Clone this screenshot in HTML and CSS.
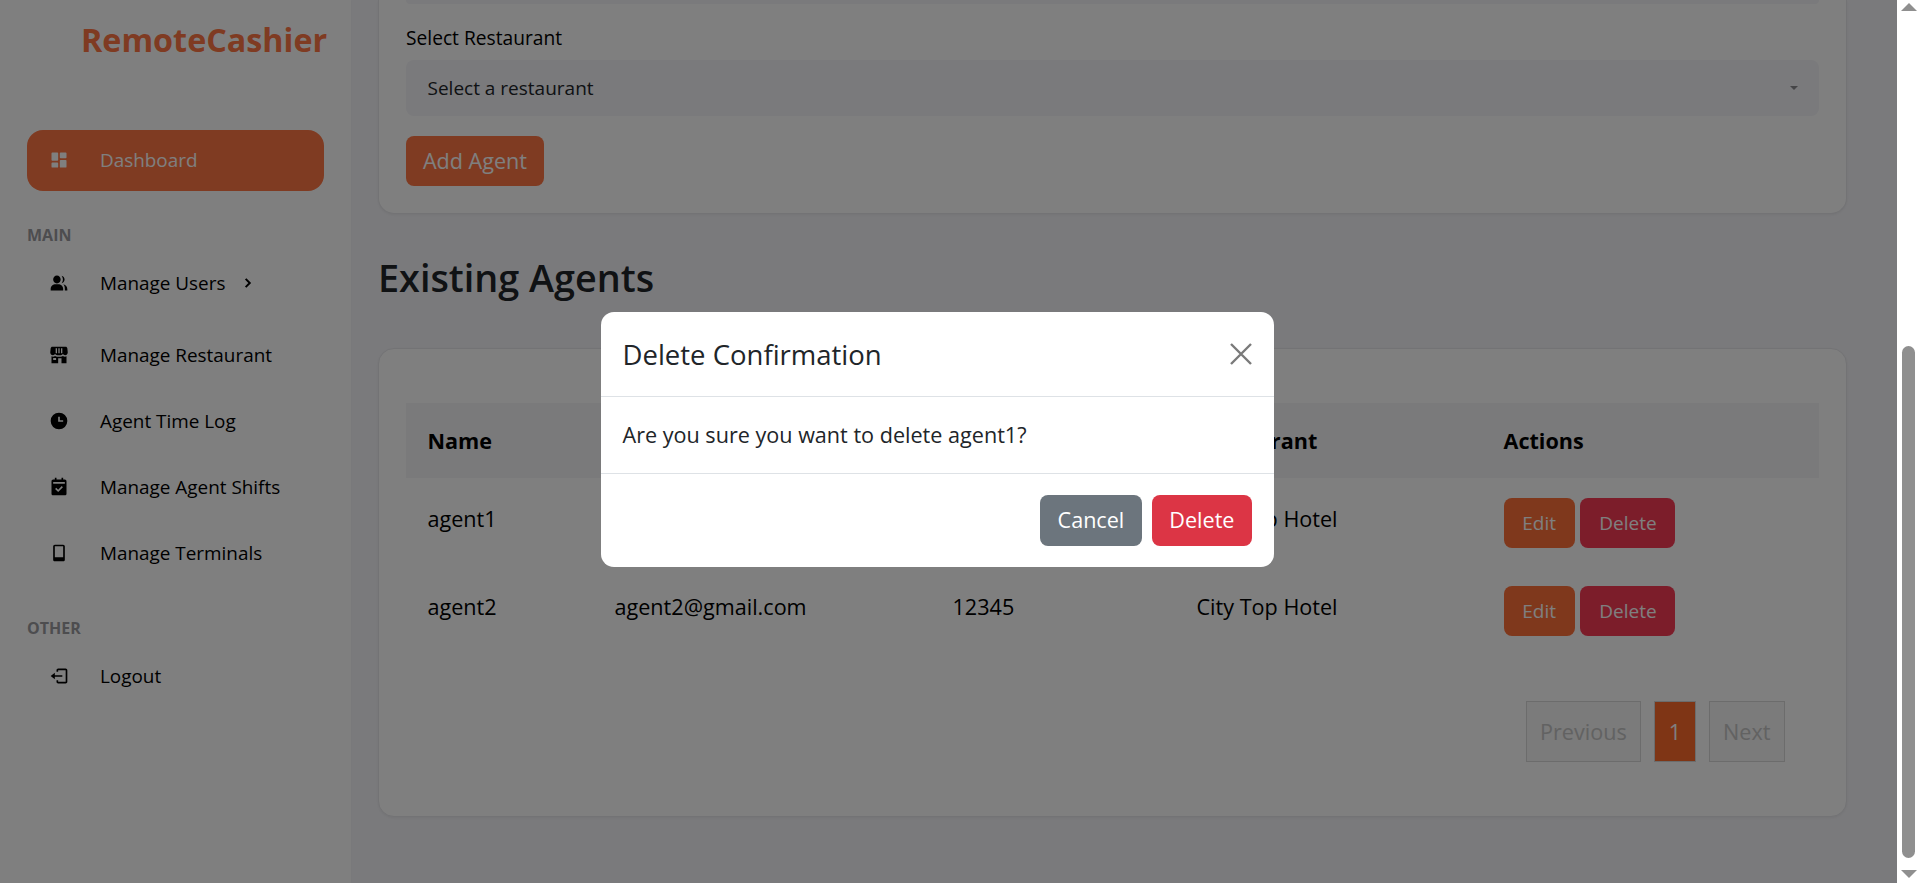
FILE: index.html
```html
<!DOCTYPE html>
<html lang="en">

<head>
    <meta charset="UTF-8">
    <title>RemoteCashier - Agents</title>
    <link rel="stylesheet" href="styles.css">
</head>

<body>
    <div class="app">
        <aside class="sidebar">
            <div class="logo">RemoteCashier</div>
            <a class="navItem navActive">
                <svg class="navIcon" viewBox="0 0 24 24"><path d="M4 13h6a1 1 0 0 0 1-1V4a1 1 0 0 0-1-1H4a1 1 0 0 0-1 1v8a1 1 0 0 0 1 1zm-1 7a1 1 0 0 0 1 1h6a1 1 0 0 0 1-1v-4a1 1 0 0 0-1-1H4a1 1 0 0 0-1 1v4zm10 0a1 1 0 0 0 1 1h6a1 1 0 0 0 1-1v-7a1 1 0 0 0-1-1h-6a1 1 0 0 0-1 1v7zm1-10h6a1 1 0 0 0 1-1V4a1 1 0 0 0-1-1h-6a1 1 0 0 0-1 1v5a1 1 0 0 0 1 1z"/></svg>
                <span>Dashboard</span>
            </a>
            <div class="navLabel labelMain">MAIN</div>
            <a class="navItem itemUsers">
                <svg class="navIcon" viewBox="0 0 24 24"><path d="M9.500 12.500c2.600 0 4.500-2.100 4.500-4.700S12.100 3 9.500 3 5 5.200 5 7.800s1.900 4.700 4.500 4.700zM11 13.500H8c-3.300 0-6 2.500-6 5.600V21h15v-1.900c0-3.100-2.700-5.600-6-5.600zM15 3.300c1 1.100 1.700 2.800 1.700 4.500 0 1.700-.6 3.300-1.700 4.400 2.100-.2 3.700-2.200 3.700-4.400S17.100 3.500 15 3.300zM17.200 13.600c1.300 1.300 1.800 3.300 1.800 5.500V21h3v-1.600c0-2.900-1.900-5.200-4.800-5.800z"/></svg>
                <span>Manage Users</span>
                <svg class="navChevron" viewBox="0 0 24 24"><path d="M8 5l7 7-7 7" /></svg>
            </a>
            <a class="navItem">
                <svg class="navIcon" viewBox="0 0 24 24"><path d="M4 2h16c1 0 1.800.8 2 1.800L22.500 9c0 1.800-1.400 3.200-3.200 3.200-1.100 0-2-.5-2.600-1.300-.6.800-1.500 1.300-2.500 1.300H9.800c-1 0-1.900-.5-2.500-1.300-.6.800-1.500 1.300-2.600 1.300-1.800 0-3.200-1.400-3.200-3.200L2 3.800C2.200 2.800 3 2 4 2zM3 13.600c.6.300 1.200.4 1.800.4.900 0 1.800-.3 2.500-.8.700.5 1.600.8 2.500.8h4.400c.9 0 1.800-.3 2.500-.8.700.5 1.600.8 2.500.8.600 0 1.200-.1 1.800-.4V22h-6v-6h-4v6H3v-8.400zM8 4v6h1.600V4H8zm3.200 0v6h1.600V4h-1.600zm3.200 0v6H16V4h-1.600zM5 15.500V18h3.500v-2.500H5z" fill-rule="evenodd"/></svg>
                <span>Manage Restaurant</span>
            </a>
            <a class="navItem">
                <svg class="navIcon" viewBox="0 0 24 24"><path d="M12 2a10 10 0 1 0 0 20 10 10 0 0 0 0-20zm5 11h-6V7h2v4h4v2z"/></svg>
                <span>Agent Time Log</span>
            </a>
            <a class="navItem">
                <svg class="navIcon" viewBox="0 0 24 24"><path d="M21 5c0-1.100-.9-2-2-2h-2V1h-2v2H9V1H7v2H5c-1.100 0-2 .9-2 2v15c0 1.100.9 2 2 2h14c1.100 0 2-.9 2-2V5zm-10 13-3.700-3.700 1.400-1.400 2.300 2.300 4.300-4.300 1.400 1.400L11 18zm8-10H5V6h14v2z"/></svg>
                <span>Manage Agent Shifts</span>
            </a>
            <a class="navItem">
                <svg class="navIcon" viewBox="0 0 24 24"><path d="M17 2H7C5.900 2 5 2.900 5 4v16c0 1.100.9 2 2 2h10c1.100 0 2-.9 2-2V4c0-1.100-.9-2-2-2zM7 4h10v13H7V4z" fill-rule="evenodd"/></svg>
                <span>Manage Terminals</span>
            </a>
            <div class="navLabel labelOther">OTHER</div>
            <a class="navItem">
                <svg class="navIcon" viewBox="0 0 24 24"><path d="M2 12l5 4v-3h9v-2H7V8l-5 4zM20 3h-9c-1.100 0-2 .9-2 2v2h2V5h9v14h-9v-2H9v2c0 1.100.9 2 2 2h9c1.100 0 2-.9 2-2V5c0-1.100-.9-2-2-2z"/></svg>
                <span>Logout</span>
            </a>
        </aside>

        <main class="content">
            <section class="card cardForm">
                <div class="fieldStub"></div>
                <label class="fieldLabel">Select Restaurant</label>
                <div class="selectBox">
                    <span>Select a restaurant</span>
                    <i class="selectArrow"></i>
                </div>
                <button class="btn btnAdd">Add Agent</button>
            </section>

            <h2 class="pageTitle">Existing Agents</h2>

            <section class="card cardTable">
                <table class="agentTable">
                    <thead>
                        <tr>
                            <th class="colName">Name</th>
                            <th class="colEmail">Email</th>
                            <th class="colPhone">Phone</th>
                            <th class="colRest">Restaurant</th>
                            <th>Actions</th>
                        </tr>
                    </thead>
                    <tbody>
                        <tr>
                            <td>agent1</td>
                            <td>agent1@gmail.com</td>
                            <td>12345</td>
                            <td>City Top Hotel</td>
                            <td class="actions">
                                <button class="btn btnSmall btnEdit">Edit</button>
                                <button class="btn btnSmall btnDanger">Delete</button>
                            </td>
                        </tr>
                        <tr>
                            <td>agent2</td>
                            <td>agent2@gmail.com</td>
                            <td>12345</td>
                            <td>City Top Hotel</td>
                            <td class="actions">
                                <button class="btn btnSmall btnEdit">Edit</button>
                                <button class="btn btnSmall btnDanger">Delete</button>
                            </td>
                        </tr>
                    </tbody>
                </table>
                <div class="pagination">
                    <a class="pageBtn pageOff">Previous</a>
                    <a class="pageBtn pageOn">1</a>
                    <a class="pageBtn pageOff">Next</a>
                </div>
            </section>
        </main>

        <div class="overlay">
            <div class="modal">
                <div class="modalHead">
                    <h3>Delete Confirmation</h3>
                    <svg class="modalClose" viewBox="0 0 22 22"><path d="M1 1l20 20M21 1L1 21"/></svg>
                </div>
                <div class="modalBody">Are you sure you want to delete agent1?</div>
                <div class="modalFoot">
                    <button class="btn btnCancel">Cancel</button>
                    <button class="btn btnConfirm">Delete</button>
                </div>
            </div>
        </div>
    </div>

    <div class="scrollbar">
        <i class="arrowUp"></i>
        <div class="scrollTrack"><div class="scrollThumb"></div></div>
        <i class="arrowDown"></i>
    </div>
</body>

</html>
```

FILE: styles.css
```css
* {
    margin: 0;
    padding: 0;
    box-sizing: border-box;
}

body {
    display: flex;
    height: 100vh;
    overflow: hidden;
    font-family: "Open Sans", "Noto Sans", sans-serif;
    font-size: 16px;
    color: #212529;
    background-color: #fff;
}

.app {
    position: relative;
    flex: 1;
    display: flex;
    overflow: hidden;
    background-color: #f5f5f9;
}

/* sidebar */
.sidebar {
    width: 351px;
    flex-shrink: 0;
    background-color: #fff;
    padding: 0 27px;
    box-shadow: 0 0 4px rgba(0, 0, 0, 0.03);
}

.logo {
    height: 130px;
    padding-top: 15px;
    padding-left: 54px;
    font-size: 32.3px;
    font-weight: 700;
    line-height: 48px;
    color: #ff7644;
    white-space: nowrap;
}

.navItem {
    display: flex;
    align-items: center;
    height: 66px;
    padding-left: 22px;
    color: #000;
    font-size: 18.9px;
}

.navActive {
    height: 61px;
    background-color: #ff7644;
    border-radius: 16px;
    color: #fff;
    padding-bottom: 2px;
}

.navIcon {
    width: 20px;
    height: 20px;
    margin-right: 31px;
    fill: currentColor;
    flex-shrink: 0;
}

.navChevron {
    width: 14px;
    height: 14px;
    margin-left: 16px;
    fill: none;
    stroke: #000;
    stroke-width: 3.4;
}

.navLabel {
    font-size: 16px;
    font-weight: 700;
    line-height: 22px;
    color: #9a9a9f;
    height: 22px;
}

.labelMain {
    margin-top: 33px;
    margin-bottom: 4px;
}

.itemUsers {
    margin-bottom: 6px;
}

.labelOther {
    margin-top: 31px;
    margin-bottom: 4px;
}

/* content */
.content {
    flex: 1;
    padding: 0 50px 0 27px;
}

.card {
    background-color: #fff;
    border: 1px solid #e6e6ea;
    border-radius: 16px;
    box-shadow: 0 1px 3px rgba(0, 0, 0, 0.06);
}

.cardForm {
    height: 214px;
    padding: 0 27px;
    border-top: none;
    border-top-left-radius: 0;
    border-top-right-radius: 0;
}

.fieldStub {
    height: 4px;
    background-color: #f4f4f8;
    border-radius: 0 0 8px 8px;
}

.fieldLabel {
    display: block;
    margin-top: 20px;
    font-size: 19.2px;
    line-height: 27px;
    color: #000;
}

.selectBox {
    display: flex;
    align-items: center;
    justify-content: space-between;
    height: 56px;
    margin-top: 9px;
    padding: 0 21.5px;
    background-color: #f4f4f8;
    border-radius: 8px;
    font-size: 19px;
}

.selectArrow {
    width: 0;
    height: 0;
    border-left: 4px solid transparent;
    border-right: 4px solid transparent;
    border-top: 4px solid #8a8a8e;
}

.btn {
    border: none;
    border-radius: 8px;
    font-family: inherit;
    color: #fff;
    cursor: pointer;
}

.btnAdd {
    display: block;
    height: 50px;
    width: 138px;
    margin-top: 20px;
    padding-bottom: 2px;
    background-color: #ff7644;
    font-size: 21.6px;
}

.pageTitle {
    margin-top: 37px;
    font-size: 37.8px;
    font-weight: 600;
    line-height: 54px;
    color: #212529;
}

.cardTable {
    height: 469px;
    margin-top: 43px;
    padding: 54px 27px 0;
}

.agentTable {
    width: 100%;
    border-collapse: collapse;
    table-layout: fixed;
    font-size: 21.6px;
    color: #000;
}

.agentTable th {
    height: 75px;
    padding-left: 21.5px;
    background-color: #f5f5f7;
    font-weight: 700;
    text-align: left;
}

.agentTable td {
    height: 88px;
    padding-left: 21.5px;
    padding-top: 27px;
    vertical-align: top;
    line-height: 28px;
    white-space: nowrap;
}

.agentTable .actions {
    padding-top: 20px;
}

.colName { width: 187px; }
.colEmail { width: 338px; }
.colPhone { width: 244px; }
.colRest { width: 307px; }

.btnSmall {
    height: 50px;
    font-size: 19px;
    padding: 0 18.8px;
}

.btnEdit { background-color: #ff7038; }
.btnDanger { background-color: #f83a55; }

.pagination {
    display: flex;
    justify-content: flex-end;
    gap: 13px;
    margin-top: 47px;
    padding-right: 34px;
}

.pageBtn {
    display: flex;
    align-items: center;
    height: 61px;
    padding: 0 13.5px;
    border: 1px solid #d8d8d8;
    font-size: 21.6px;
}

.pageOff {
    color: #c4c4c4;
    background-color: #f6f6f6;
}

.pageOn {
    color: #fff;
    background-color: #ff6a2b;
}

/* modal */
.overlay {
    position: absolute;
    inset: 0;
    display: flex;
    align-items: flex-start;
    justify-content: center;
    padding-right: 23px;
    background-color: rgba(0, 0, 0, 0.5);
}

.modal {
    width: 673px;
    margin-top: 312px;
    background-color: #fff;
    border-radius: 13px;
    color: #212529;
}

.modalHead {
    display: flex;
    align-items: center;
    justify-content: space-between;
    height: 85px;
    padding: 0 22px;
    border-bottom: 1px solid #dee2e6;
}

.modalHead h3 {
    font-size: 27.5px;
    font-weight: 500;
}

.modalClose {
    width: 22px;
    height: 22px;
    fill: none;
    stroke: #7a7a7a;
    stroke-width: 2.4;
}

.modalBody {
    display: flex;
    align-items: center;
    height: 77px;
    padding: 0 22px 2px;
    font-size: 21.6px;
    border-bottom: 1px solid #dee2e6;
}

.modalFoot {
    display: flex;
    justify-content: flex-end;
    gap: 10px;
    padding: 21px 22px;
}

.modalFoot .btn {
    height: 51px;
    font-size: 21.6px;
    padding: 0 17px 2px;
}

.modalFoot .btnCancel {
    padding: 0 18px 2px;
}

.btnCancel { background-color: #6c757d; }
.btnConfirm { background-color: #dc3545; }

/* scrollbar */
.scrollbar {
    width: 23px;
    flex-shrink: 0;
    display: flex;
    flex-direction: column;
    align-items: center;
    background-color: #fff;
}

.scrollTrack {
    flex: 1;
    width: 13px;
    padding-top: 335px;
}

.scrollThumb {
    height: 512px;
    background-color: #8f8f8f;
    border-radius: 7px;
}

.arrowUp {
    width: 0;
    height: 0;
    margin-top: 3px;
    border-left: 8px solid transparent;
    border-right: 8px solid transparent;
    border-bottom: 8px solid #8f8f8f;
}

.arrowDown {
    width: 0;
    height: 0;
    margin-bottom: 5px;
    border-left: 8px solid transparent;
    border-right: 8px solid transparent;
    border-top: 8px solid #8f8f8f;
}
```
